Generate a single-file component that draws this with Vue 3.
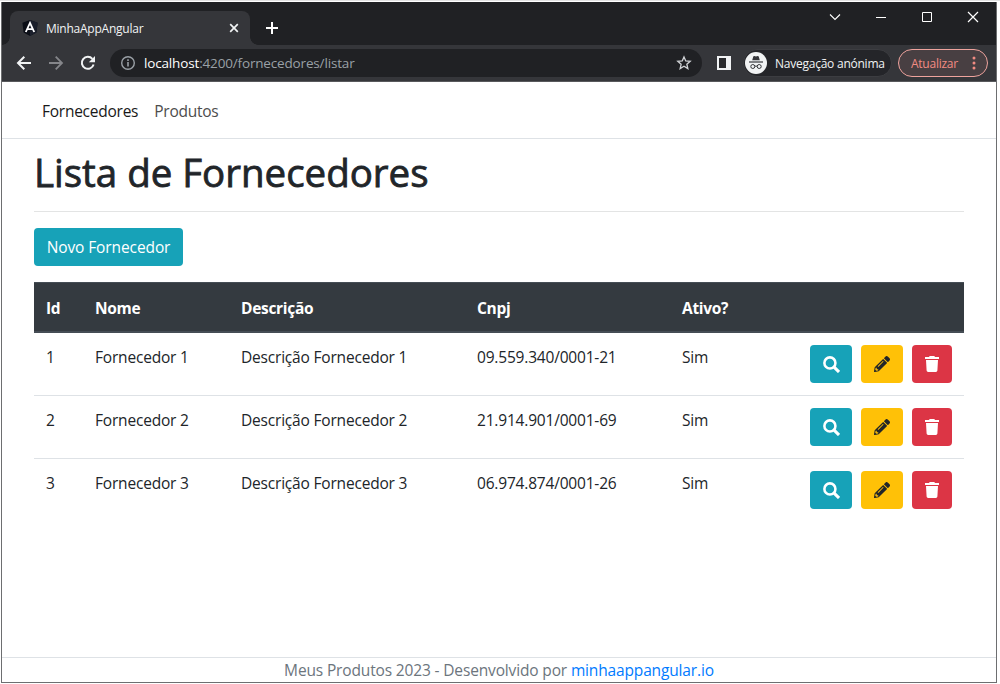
<script setup>
const suppliers = [
  { id: 1, name: 'Fornecedor 1', description: 'Descrição Fornecedor 1', cnpj: '09.559.340/0001-21', active: 'Sim' },
  { id: 2, name: 'Fornecedor 2', description: 'Descrição Fornecedor 2', cnpj: '21.914.901/0001-69', active: 'Sim' },
  { id: 3, name: 'Fornecedor 3', description: 'Descrição Fornecedor 3', cnpj: '06.974.874/0001-26', active: 'Sim' },
]
</script>

<template>
  <div class="screen">
    <div class="window">
      <div class="titlebar">
        <div class="tab">
          <svg class="shield" width="16" height="16" viewBox="0 0 16 16">
            <path d="M8 0 15.6 2.7 14.4 12.5 8 16 1.6 12.5.4 2.7Z" fill="#0b0e16" />
            <path d="M8 0 15.6 2.7 14.4 12.5 8 16Z" fill="#1b1f2b" />
            <path d="M3.800 12 8 2.800l4.200 9.200M5.400 9.200h5.200" fill="none" stroke="#fff" stroke-width="1.800" />
          </svg>
          <span class="tab-title">MinhaAppAngular</span>
          <svg class="tab-close" width="10" height="10" viewBox="0 0 10 10"><path d="m1.2 1.2 7.6 7.6m0-7.6L1.2 8.8" stroke="#f1f3f4" stroke-width="1.7" /></svg>
        </div>
        <svg class="plus" width="12" height="12" viewBox="0 0 12 12"><path d="M6 0v12M0 6h12" stroke="#fff" stroke-width="2" /></svg>
        <div class="controls">
          <svg width="12" height="12" viewBox="0 0 12 12"><path d="m1 3.5 5 5 5-5" fill="none" stroke="#fff" stroke-width="1.100" /></svg>
          <svg width="12" height="12" viewBox="0 0 12 12"><path d="M1 6.5h10" stroke="#fff" /></svg>
          <svg width="12" height="12" viewBox="0 0 12 12"><path d="M1.5 1.5h9v9h-9z" fill="none" stroke="#fff" /></svg>
          <svg width="12" height="12" viewBox="0 0 12 12"><path d="m1 1 10 10M11 1 1 11" stroke="#fff" stroke-width="1.2" /></svg>
        </div>
      </div>

      <div class="toolbar">
        <div class="nav-icons">
          <svg width="16" height="16" viewBox="0 0 16 16"><path d="M15 8H2m6.3-6.3L2 8l6.3 6.3" fill="none" stroke="#f1f3f4" stroke-width="2" /></svg>
          <svg width="16" height="16" viewBox="0 0 16 16"><path d="M1 8h13M7.7 1.7 14 8l-6.300 6.300" fill="none" stroke="#85868a" stroke-width="1.8" /></svg>
          <svg width="16" height="16" viewBox="0 0 16 16"><path d="M13.6 9.500A6 6 0 1 1 12.400 3.900" fill="none" stroke="#f1f3f4" stroke-width="2" /><path d="M15 1v6.200H8.800Z" fill="#f1f3f4" /></svg>
        </div>
        <div class="address">
          <svg width="16" height="16" viewBox="0 0 16 16"><circle cx="8" cy="8" r="6.300" fill="none" stroke="#9aa0a6" stroke-width="1.400" /><path d="M8 7v4.500M8 4.300v1.700" stroke="#9aa0a6" stroke-width="1.600" /></svg>
          <span class="url"><b>localhost</b>:4200/fornecedores/listar</span>
          <svg class="star" width="16" height="16" viewBox="0 0 16 16"><path d="m8 1.900 1.750 4.050 4.450.4-3.350 2.900 1 4.350L8 11.300l-3.850 2.300 1-4.350L1.800 6.350l4.450-.4Z" fill="none" stroke="#d2d4d7" stroke-width="1.300" /></svg>
        </div>
        <svg class="panel" width="14" height="14" viewBox="0 0 14 14"><path d="M0 0h14v14H0Z" fill="#f1f3f4" /><path d="M2 2h7v10H2Z" fill="#292a2d" /></svg>
        <div class="incognito">
          <svg width="22" height="22" viewBox="0 0 22 22">
            <circle cx="11" cy="11" r="11" fill="#f1f3f4" />
            <path d="m7.200 8.200 1.100-3.600q.3-.7 1-.5l1.700.4 1.700-.4q.7-.2 1 .5l1.100 3.600Z" fill="#35363a" />
            <path d="M4 10h14" stroke="#35363a" stroke-width="1.200" />
            <g fill="none" stroke="#35363a" stroke-width="1"><circle cx="7.800" cy="14.500" r="2" /><circle cx="14.200" cy="14.500" r="2" /><path d="M9.800 14.300q1.200-.6 2.400 0" /></g>
          </svg>
          <span>Navegação anónima</span>
        </div>
        <div class="update">
          <span>Atualizar</span>
          <svg width="4" height="14" viewBox="0 0 4 14"><g fill="#f28b82"><circle cx="2" cy="2" r="1.500" /><circle cx="2" cy="7" r="1.500" /><circle cx="2" cy="12" r="1.500" /></g></svg>
        </div>
      </div>

      <nav class="navbar">
        <a class="active">Fornecedores</a>
        <a>Produtos</a>
      </nav>

      <main>
        <h1>Lista de Fornecedores</h1>
        <hr />
        <button class="new-btn">Novo Fornecedor</button>
        <table>
          <colgroup><col class="c-id" /><col class="c-name" /><col class="c-desc" /><col class="c-cnpj" /><col class="c-active" /><col /></colgroup>
          <thead>
            <tr><th>Id</th><th>Nome</th><th>Descrição</th><th>Cnpj</th><th>Ativo?</th><th></th></tr>
          </thead>
          <tbody>
            <tr v-for="s in suppliers" :key="s.id">
              <td>{{ s.id }}</td>
              <td>{{ s.name }}</td>
              <td>{{ s.description }}</td>
              <td>{{ s.cnpj }}</td>
              <td>{{ s.active }}</td>
              <td class="actions-cell">
                <div class="actions">
                  <button class="view"><svg width="17" height="17" viewBox="0 0 16 16"><circle cx="6.500" cy="6.500" r="5.200" fill="none" stroke="#fff" stroke-width="2.400" /><path d="m10.200 10.200 4.900 4.900" stroke="#fff" stroke-width="2.900" /></svg></button>
                  <button class="edit"><svg width="16" height="16" viewBox="0 0 512 512"><path fill="#212529" d="M498 142l-46 46c-5 5-12 5-17 0L324 77c-5-5-5-12 0-17l46-46c19-19 49-19 68 0l60 60c19 19 19 49 0 68zm-214-42L22 362 0 484c-3 16 12 30 28 28l122-22 262-262c5-5 5-12 0-17L301 100c-4-5-12-5-17 0zM124 340c-5-6-5-14 0-20l154-154c6-5 14-5 20 0s5 14 0 20L144 340c-6 5-14 5-20 0zm-36 84h48v36l-64 12-32-31 12-65h36v48z" /></svg></button>
                  <button class="delete"><svg width="14" height="16" viewBox="0 0 14 16"><path d="M0 1h4l.7-1h4.600L10 1h4v2H0ZM1 4h12l-.6 10.600q-.1 1.400-1.500 1.400H3.100q-1.400 0-1.500-1.400Z" fill="#fff" /></svg></button>
                </div>
              </td>
            </tr>
          </tbody>
        </table>
      </main>

      <footer><span>Meus Produtos 2023 - Desenvolvido por <a>minhaappangular.io</a></span></footer>
    </div>
  </div>
</template>

<style>
body { margin: 0; overflow: hidden; }
</style>

<style scoped>
* { box-sizing: border-box; }
.screen { width: 1000px; height: 684px; padding: 1px 3px 1px 1px; background: #fff; border-top: 1px solid #e2e2e2; font-family: "Open Sans", "Noto Sans", sans-serif; font-size: 15.5px; letter-spacing: -.19px; color: #212529; }
.window { height: 681px; display: flex; flex-direction: column; background: #fff; border: 1px solid #6d6e70; border-top: 0; }
svg { display: block; flex: none; }
.titlebar { height: 43px; flex: none; background: #202124; display: flex; align-items: flex-end; }
.tab { width: 240px; height: 34px; margin-left: 8px; border-radius: 8px 8px 0 0; background: #35363a; display: flex; align-items: center; padding: 0 11px 0 12px; font-size: 12px; color: #f1f3f4; position: relative; }
.tab::before, .tab::after { content: ""; position: absolute; bottom: 0; width: 8px; height: 8px; }
.tab::before { left: -8px; background: radial-gradient(circle at 0 0, #202124 7.5px, #35363a 8px); }
.tab::after { right: -8px; background: radial-gradient(circle at 100% 0, #202124 7.5px, #35363a 8px); }
.tab-title { margin-left: 8px; letter-spacing: -.24px; }
.tab-close { margin-left: auto; }
.plus { margin: 0 0 11px 16px; }
.controls { margin-left: auto; display: flex; gap: 34px; padding-right: 17px; align-self: flex-start; padding-top: 9px; }
.toolbar { height: 37px; flex: none; background: #35363a; border-bottom: 1px solid #58595c; display: flex; align-items: center; font-size: 12px; }
.nav-icons { display: flex; gap: 16px; margin-left: 14px; }
.address { width: 592px; height: 28px; margin-left: 14px; border-radius: 14px; background: #202124; display: flex; align-items: center; padding: 0 10px; }
.url { margin-left: 8px; color: #9aa0a6; font-size: 13.5px; letter-spacing: -.16px; }
.url b { color: #fff; font-weight: 400; }
.star { margin-left: auto; }
.panel { margin-left: 15px; }
.incognito { width: 149px; height: 28px; margin-left: 12px; padding-left: 1px; border-radius: 14px; border: 1px solid #3c3d41; background: #242529; color: #f1f3f4; display: flex; align-items: center; white-space: nowrap; letter-spacing: -.24px; }
.incognito span { margin-left: 8px; }
.update { width: 90px; height: 28px; margin-left: 6px; border-radius: 14px; border: 1px solid #eea39d; background: #483f42; color: #f28b82; display: flex; align-items: center; justify-content: space-between; padding: 0 11px 0 12px; letter-spacing: -.25px; }
.navbar { height: 57px; flex: none; border-bottom: 1px solid #dee2e6; display: flex; align-items: center; gap: 16px; padding: 1px 0 0 40px; letter-spacing: -.25px; }
.navbar a { color: #4d4d4d; }
.navbar a.active { color: #191919; }
main { padding: 0 32px; flex: 1; }
h1 { margin: 9px 0 0; height: 50px; line-height: 48px; font-size: 38.5px; font-weight: 500; letter-spacing: -.02px; white-space: nowrap; -webkit-text-stroke: .8px #212529; }
hr { margin: 13px 0 16px; border: 0; border-top: 1px solid #e3e4e4; }
button { border: 0; border-radius: 4px; height: 38px; padding: 0; font: inherit; letter-spacing: -.1px; color: #fff; display: flex; align-items: center; justify-content: center; }
.new-btn { width: 149px; background: #17a2b8; }
table { width: 930px; margin-top: 16px; border-collapse: separate; border-spacing: 0; table-layout: fixed; }
.c-id { width: 49px; } .c-name { width: 146px; } .c-desc { width: 236px; } .c-cnpj { width: 205px; } .c-active { width: 128px; }
th { height: 51px; background: #343a40; color: #fff; text-align: left; font-weight: 700; letter-spacing: -.3px; padding: 1px 12px 0; border-top: 1px solid #454d55; border-bottom: 2px solid #454d55; }
td { height: 63px; padding: 12px 12px 0; vertical-align: top; line-height: 25px; white-space: nowrap; }
tbody tr + tr td { border-top: 1px solid #dee2e6; }
tbody tr:first-child td { height: 62px; }
.actions { display: flex; gap: 9px; }
.view { width: 42px; background: #17a2b8; padding-left: 1px; }
.edit { width: 42px; background: #ffc107; }
.delete { width: 40px; background: #dc3545; }
footer { height: 25px; flex: none; border-top: 1px solid #dee2e6; color: #6c757d; text-align: center; line-height: 25px; letter-spacing: -.15px; }
footer a { color: #007bff; }
</style>
